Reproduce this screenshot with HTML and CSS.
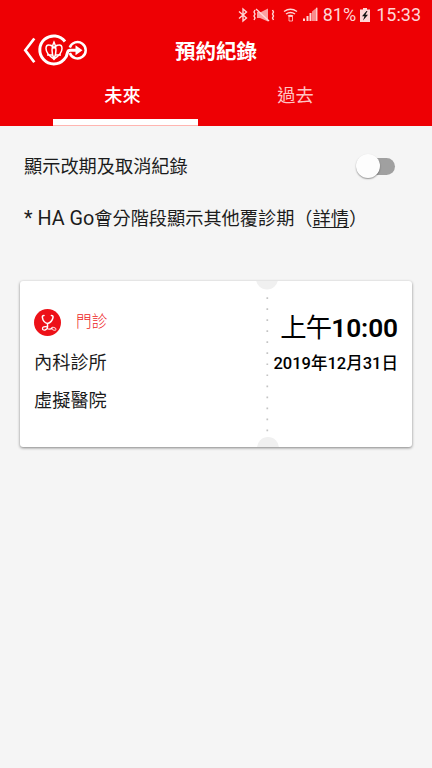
FILE: index.html
```html
<!DOCTYPE html>
<html lang="zh-Hant">
<head>
<meta charset="utf-8">
<meta name="viewport" content="width=device-width, initial-scale=1">
<title>預約紀錄</title>
<link rel="stylesheet" href="styles.css">
</head>
<body>
<header class="top">
  <div class="status">
    <svg class="status-icons" width="82" height="16" viewBox="0 0 82 16" fill="none" stroke="currentColor" stroke-width="1.4">
      <path d="M1 4.500 8.500 11 5 14V2l3.500 3L1 11.500"/>
      <path d="M19 5v6h3l8 3.500V1.500L23 5z" fill="currentColor" stroke="none" opacity=".75"/>
      <path d="M18 2l13 12"/>
      <path d="M17 3l-1 2 1 2-1 2 1 2-1 2M34.500 3l1 2-1 2 1 2-1 2 1 2" stroke-width="1.400"/>
      <path d="M46 4.500q6.500-4.500 13 0M48 7q4.500-3 9 0M50 9.200q2.500-1.500 5 0" stroke-width="1.500"/>
      <path d="M51 9.500h3.500v4.500H51z" stroke-width="1" opacity=".8"/>
      <g fill="currentColor" stroke="none"><path d="M65 11.500h2V14h-2zM68.500 9h2v5h-2zM71.500 6h2v8h-2z"/><path d="M74 4.500 79 .5V14h-5z" opacity=".65"/><path d="M78 .8h1.500V14H78z" opacity=".85"/></g>
    </svg>
    <span class="percent">81%</span>
    <svg class="battery" width="10" height="15" viewBox="0 0 10 15"><path d="M3 0h4v1.500h3V14H0V1.500h3z" fill="currentColor"/><path d="M6.500 3 2 8.200h2.500L3 12.500 8 6.800H5.400L7.500 3z" fill="#111"/></svg>
    <span class="clock">15:33</span>
  </div>
  <div class="titlebar">
    <svg class="logo" width="66" height="36" viewBox="22 32 66 36" fill="none" stroke="#fff" stroke-width="3">
      <path d="M34.300 38.500 25.300 50.200l9 12" stroke-width="2.700"/>
      <path d="M65 41.500A14 14 0 1 0 64 59.500Q67 56.500 67.500 52.500 68 50.200 70.500 50.200H79"/>
      <path d="M69.800 47.500a8.200 8.200 0 1 1 0 5.500" stroke-width="2.500"/>
      <path d="M75.500 45.200 82.500 50.200l-7 5z" fill="#fff" stroke="none"/>
      <path d="M54 59Q46 54 46 48.500q0-4 3.300-3.500Q52 45 54 48q2-3 4.700-3 3.300-.5 3.300 3.500Q62 54 54 59z" stroke-width="1.500"/>
      <path d="M54 42q-4 8 0 17 4-9 0-17z" stroke-width="1.500"/><path d="M47 55h5M56 55h5" stroke-width="1.400"/>
    </svg>
    <h1>預約紀錄</h1>
  </div>
  <nav class="tabs">
    <span class="tab active">未來</span>
    <span class="tab">過去</span>
  </nav>
</header>
<main>
  <div class="option">
    <span class="label">顯示改期及取消紀錄</span>
    <span class="switch"><i class="knob"></i></span>
  </div>
  <p class="note"><span class="latin">* HA Go</span>會分階段顯示其他覆診期（<span class="link">詳情</span>）</p>
  <section class="card">
    <div class="place">
      <div class="kind">
        <svg width="28" height="28" viewBox="0 0 28 28" fill="none" stroke="#fff" stroke-linecap="round"><circle cx="13.500" cy="14.500" r="13.500" fill="#ed1118" stroke="none"/><path d="M10 7.500q-2 0-1.600 2Q9 14.300 13.500 15.500 18 14.300 19 9.500q.4-2-1.600-2M13.500 15.500v3.500" stroke-width="1.500"/><path d="M13.500 18.800q-5-.5-5 1.600 0 2 2.500 1.600 2.500-.6 2.500-3.200M13 20.500q3 1.500 5-.3" stroke-width="1.300"/><ellipse cx="19.800" cy="20.800" rx="2.300" ry="1.300" transform="rotate(20 19.800 20.800)" stroke-width="1" opacity=".8"/></svg>
        <span>門診</span>
      </div>
      <div class="line">內科診所</div>
      <div class="line">虛擬醫院</div>
    </div>
    <svg class="tear" width="24" height="166" viewBox="0 0 24 166"><circle cx="12" cy="-2.500" r="11" fill="#f0f0f0"/><circle cx="13" cy="167" r="11" fill="#f0f0f0"/><path d="M12.300 16.200v135" stroke="#c4c4c4" stroke-width="1.700" stroke-dasharray="1.700 9.330"/></svg>
    <div class="when">
      <div class="time"><span>上午</span>10:00</div>
      <div class="date">2019年12月31日</div>
    </div>
  </section>
</main>
</body>
</html>
```
FILE: styles.css
```css
* { box-sizing: border-box; }
body {
  margin: 0;
  min-height: 768px;
  background: #f5f5f5;
  color: #1c1c1c;
  font-family: Roboto, "Noto Sans CJK TC", sans-serif;
  font-size: 18.2px;
}
svg { display: block; flex: none; }
.top { height: 126px; background: #ee0004; color: #fff; }
.status {
  display: flex;
  align-items: center;
  justify-content: flex-end;
  height: 30px;
  padding-right: 11px;
  color: #ffd6d6;
  font-size: 18px;
  line-height: 30px;
}
.status-icons { margin-right: 3px; }
.battery { margin: 0 6px 0 4px; }
.titlebar { position: relative; height: 42px; padding: 2px 0 0 22px; }
h1 {
  position: absolute;
  inset: 0;
  margin: 0;
  text-align: center;
  font-size: 20.5px;
  font-weight: 700;
  line-height: 44px;
}
.tabs { display: flex; height: 54px; padding: 0 65px 0 53px; gap: 25px; }
.tab {
  flex: 0 0 145px;
  height: 54px;
  text-align: center;
  line-height: 48px;
  color: #ffc4c4;
}
.active {
  color: #fff;
  font-weight: 500;
  padding-right: 6px;
  background: linear-gradient(#fff, #fff) 0 47px / 100% 6px no-repeat, linear-gradient(#ffb5b0, #ffb5b0) 0 53px / 100% 1px no-repeat;
}
main { padding: 26px 20px 0; }
.option {
  display: flex;
  justify-content: space-between;
  align-items: center;
  height: 28px;
  padding: 0 17px 0 4px;
}
.label { padding-bottom: 2px; }
.switch {
  display: flex;
  align-items: center;
  width: 38px;
  height: 17px;
  border-radius: 9px;
  background: #a0a0a0;
}
.knob {
  flex: none;
  width: 24px;
  height: 24px;
  margin-left: -1px;
  border-radius: 50%;
  background: #fdfdfd;
  box-shadow: 0 1px 1.5px #0006;
}
.note { margin: 25px 0 0 4px; height: 28px; line-height: 28px; white-space: nowrap; }
.latin { font-size: 19.8px; }
.link { text-decoration: underline; text-decoration-thickness: 1px; text-underline-offset: 2px; }
.card {
  display: flex;
  height: 166px;
  margin-top: 48px;
  border-radius: 3px;
  background: #fff;
  box-shadow: 0 1px 3px #0007;
}
.place { flex: none; width: 235px; padding: 27px 0 0 14px; }
.kind { display: flex; align-items: center; height: 28px; gap: 14px; color: #ed1c24; font-size: 15.700px; font-weight: 300; }
.kind span { padding-bottom: 3px; }
.line { height: 37.500px; line-height: 37.500px; }
.line:nth-child(2) { margin-top: 8px; }
.when { flex: 1; margin-left: -8px; padding: 28px 14px 0 0; text-align: right; color: #000; white-space: nowrap; }
.time { height: 38px; line-height: 38px; font-size: 26.300px; font-weight: 600; letter-spacing: -.1px; }
.time span { font-weight: 400; letter-spacing: -.8px; }
.date { height: 34px; line-height: 34px; font-size: 16.500px; font-weight: 500; }
```
